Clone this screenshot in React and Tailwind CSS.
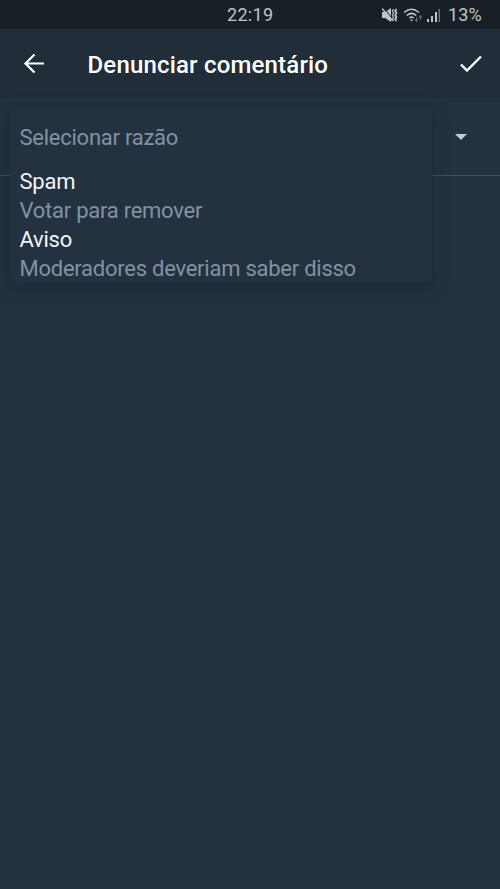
import React from 'react';

const options = [
  { title: 'Spam', description: 'Votar para remover' },
  { title: 'Aviso', description: 'Moderadores deveriam saber disso' },
];

const StatusBar = () => (
  <div className="flex h-[29px] items-center bg-[#182027] text-[18px] text-[#bfc4c8]">
    <span className="ml-[227px] leading-[30px] tracking-[0.3px]">22:19</span>
    <div className="ml-auto flex items-center pr-[18px]">
      {/* Muted, vibrating */}
      <svg width="17" height="16" viewBox="0 0 17 16" className="mr-[5px]">
        <path d="M0 5h3l6-4v14l-6-4H0z" fill="#bfc4c8" />
        <path d="M1.500 0l9 12" stroke="#182027" strokeWidth="1" />
        <path d="M0 1.500l10.500 12" stroke="#bfc4c8" strokeWidth="1.400" />
        <path d="M11.500 2l-1 2 1 2-1 2 1 2-1 2 1 2" fill="none" stroke="#bfc4c8" strokeWidth="1.200" />
        <path d="M14.500 2l-1.300 2 1.300 2-1.300 2 1.300 2-1.300 2 1.300 2" fill="none" stroke="#bfc4c8" strokeWidth="1.800" />
      </svg>
      <svg width="19" height="16" viewBox="0 0 19 16" className="mr-[4px]">
        <path d="M0 5.500q7.500-6.500 15 0M2.800 8.500q4.700-4.200 9.400 0M5.300 11q2.200-1.800 4.400 0" fill="none" stroke="#bfc4c8" strokeWidth="1.500" />
        <path d="M7.500 14.500l-1.500-2h3z" fill="#bfc4c8" />
        <path d="M12.500 10v4M11 12.500l1.500 2 1.500-2M16.500 13V8.500M15 10.500l1.500-2 1.500 2" fill="none" stroke="#69737b" />
      </svg>
      <svg width="14" height="14" viewBox="0 0 14 14" className="mr-[7px]">
        <path d="M0 11h2v3H0zM4 8h2v6H4zM8 4h2v10H8z" fill="#bfc4c8" />
        <path d="M11.500 1h1.500v13h-1.500z" fill="#69737b" />
      </svg>
      <span className="leading-[30px] tracking-[0.2px]">13%</span>
    </div>
  </div>
);

const App = () => {
  return (
    <div className="h-[889px] w-[500px] overflow-hidden bg-[#243141] font-['Roboto',sans-serif]">
      <StatusBar />
      <header className="flex h-[69px] items-center bg-[#212d38] text-white">
        <svg width="24" height="24" viewBox="0 0 24 24" className="ml-[22px]" fill="none" stroke="currentColor" strokeWidth="2.2">
          <path d="M22 11.500H4M12.500 2.500l-9 9 9 9" />
        </svg>
        <h1 className="mt-[2px] ml-[41.500px] text-[24px] font-medium tracking-[0.18px]">Denunciar comentário</h1>
        <svg width="24" height="24" viewBox="0 0 24 24" className="mr-[17px] ml-auto" fill="none" stroke="currentColor" strokeWidth="2.4">
          <path d="M2 12.500l6 6L22 4.500" />
        </svg>
      </header>
      <main className="relative h-[78px] border-b border-[#44515e]">
        <svg width="12" height="6" viewBox="0 0 12 6" className="absolute top-[36px] left-[455px]">
          <path d="M0 0h12L6 6z" fill="#c3ccd4" />
        </svg>
        {/* Reason menu, floats over the spinner row */}
        <div className="absolute top-[9px] left-[10px] h-[175px] w-[422px] bg-[#243141] pl-[9.500px] text-[22px] leading-[29px] tracking-[-0.25px] text-[#8292a1] shadow-[0_5px_16px_rgba(15,30,40,0.35)]">
          <p className="pt-[16px] pb-[15px]">Selecionar razão</p>
          {options.map((option) => (
            <div key={option.title}>
              <p className="text-[#f0f4f7]">{option.title}</p>
              <p>{option.description}</p>
            </div>
          ))}
        </div>
      </main>
    </div>
  );
};

export default App;
